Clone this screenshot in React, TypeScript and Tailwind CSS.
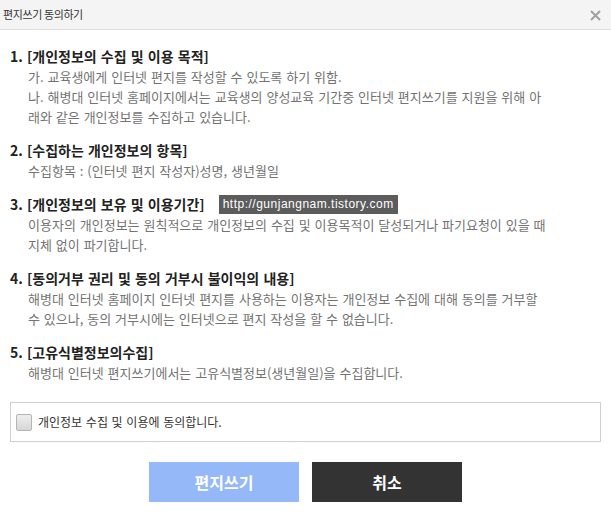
import { useState } from "react";

interface Section {
  title: string;
  lines: string[];
  tag?: string;
}

const sections: Section[] = [
  {
    title: "1. [개인정보의 수집 및 이용 목적]",
    lines: [
      "가. 교육생에게 인터넷 편지를 작성할 수 있도록 하기 위함.",
      "나. 해병대 인터넷 홈페이지에서는 교육생의 양성교육 기간중 인터넷 편지쓰기를 지원을 위해 아",
      "래와 같은 개인정보를 수집하고 있습니다.",
    ],
  },
  {
    title: "2. [수집하는 개인정보의 항목]",
    lines: ["수집항목 : (인터넷 편지 작성자)성명, 생년월일"],
  },
  {
    title: "3. [개인정보의 보유 및 이용기간]",
    tag: "http://gunjangnam.tistory.com",
    lines: [
      "이용자의 개인정보는 원칙적으로 개인정보의 수집 및 이용목적이 달성되거나 파기요청이 있을 때",
      "지체 없이 파기합니다.",
    ],
  },
  {
    title: "4. [동의거부 권리 및 동의 거부시 불이익의 내용]",
    lines: [
      "해병대 인터넷 홈페이지 인터넷 편지를 사용하는 이용자는 개인정보 수집에 대해 동의를 거부할",
      "수 있으나, 동의 거부시에는 인터넷으로 편지 작성을 할 수 없습니다.",
    ],
  },
  {
    title: "5. [고유식별정보의수집]",
    lines: ["해병대 인터넷 편지쓰기에서는 고유식별정보(생년월일)을 수집합니다."],
  },
];

export default function App() {
  const [agreed, setAgreed] = useState(false);

  return (
    <div className="w-[611px] h-[515px] overflow-hidden bg-white font-['Noto_Sans_CJK_KR','Noto_Sans',sans-serif]">
      {/* header */}
      <div className="h-[30px] bg-[#f4f4f4] border-b border-[#dedede] flex items-center justify-between pl-[3px] pr-[10px]">
        <span className="text-[11px] text-[#333] tracking-[-0.4px]">편지쓰기 동의하기</span>
        <svg width="11" height="11" viewBox="0 0 11 11" className="mt-[2px]">
          <path d="M1 1L10 10M10 1L1 10" stroke="#a0a0a0" strokeWidth="2" />
        </svg>
      </div>

      <div className="pt-4 px-[10px]">
        {sections.map((s) => (
          <div key={s.title} className="mb-[13px]">
            <div className="flex items-center gap-[14px] text-[14px] leading-[21px] font-bold text-[#222] [word-spacing:1px]">
              <span>{s.title}</span>
              {s.tag && (
                <span className="h-[19px] px-[4px] bg-[#5c5c5c] text-white text-[12px] leading-[19px] font-normal tracking-[0.5px] [word-spacing:0] font-['Liberation_Sans',sans-serif]">
                  {s.tag}
                </span>
              )}
            </div>
            <div className="pl-[18px] text-[13px] leading-[20px] text-[#737373] whitespace-nowrap [word-spacing:1px]">
              {s.lines.map((l) => (
                <div key={l}>{l}</div>
              ))}
            </div>
          </div>
        ))}

        <label className="mt-[19px] h-[40px] border border-[#cfcfcf] flex items-center gap-[6px] px-[5px] cursor-pointer">
          <input
            type="checkbox"
            checked={agreed}
            onChange={(e) => setAgreed(e.target.checked)}
            className="appearance-none w-[16px] h-[17px] rounded-[2px] border border-[#b5b5b5] bg-gradient-to-b from-[#eeeeee] to-[#d6d6d6] checked:bg-[#94b9f8]"
          />
          <span className="text-[12px] text-[#333] [word-spacing:1px]">개인정보 수집 및 이용에 동의합니다.</span>
        </label>

        <div className="mt-[20px] flex justify-center gap-[13px]">
          <button className="w-[150px] h-[40px] bg-[#94b8f8] text-white text-[16px] font-bold">편지쓰기</button>
          <button className="w-[150px] h-[40px] bg-[#333333] text-white text-[16px] font-bold">취소</button>
        </div>
      </div>
    </div>
  );
}
